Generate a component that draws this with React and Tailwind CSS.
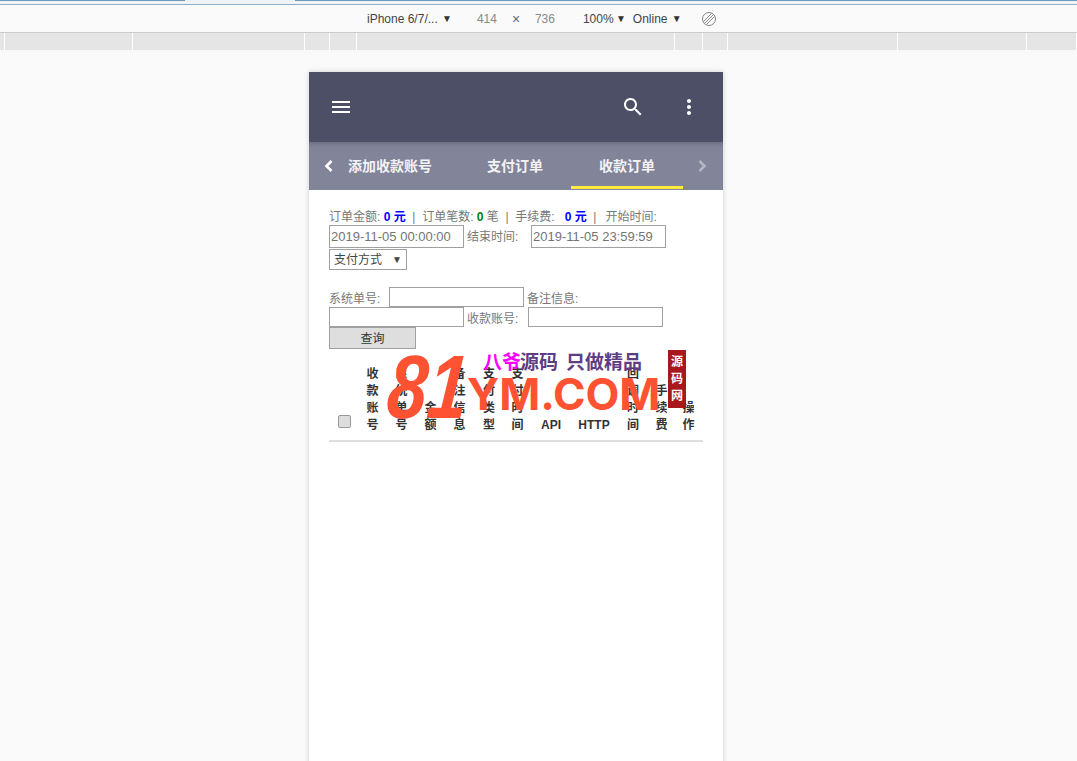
const rulerWidths = [5, 128, 172, 25, 27, 318, 28, 25, 170, 129, 50];
const font = "font-['Liberation_Sans','Noto_Sans_CJK_SC',sans-serif]";

const columns = [
  { label: '收款账号', w: 'w-[29px]' },
  { label: '系统单号', w: 'w-[29px]' },
  { label: '金额', w: 'w-[29px]' },
  { label: '备注信息', w: 'w-[29px]' },
  { label: '支付类型', w: 'w-[30px]' },
  { label: '支付时间', w: 'w-[27px]' },
  { label: 'API', w: 'w-[40px]', latin: true },
  { label: 'HTTP', w: 'w-[46px]', latin: true },
  { label: '回调时间', w: 'w-[32px]' },
  { label: '手续费', w: 'w-[25px]' },
  { label: '操作', w: 'w-[29px]' },
];

function DevToolbar() {
  return (
    <div className="h-[28px] border-b border-[#ccc] pt-[6px] text-[12px] leading-[14px] text-[#444]">
      <div className="flex items-center pl-[367px]">
        <span className="w-[75px]">iPhone 6/7/...</span>
        <span className="text-[10px] text-[#333]">▼</span>
        <span className="ml-[25px] w-[35px] text-[#888]">414</span>
        <span className="w-[23px] text-[14px] text-[#666]">×</span>
        <span className="w-[48px] text-[#888]">736</span>
        <span className="w-[33px]">100%</span>
        <span className="text-[10px] text-[#333]">▼</span>
        <span className="ml-[7px] w-[39px]">Online</span>
        <span className="text-[10px] text-[#333]">▼</span>
        <svg className="ml-[19px]" width="16" height="16" viewBox="0 0 16 16" fill="none" stroke="#888" strokeWidth="1">
          <circle cx="8" cy="8" r="6.5" />
          <path d="M2.5 10.5 10.5 2.5M5.5 13.5 13.5 5.5M3.5 12.5 12.5 3.5" />
        </svg>
      </div>
    </div>
  );
}

function Ruler() {
  return (
    <div className="flex h-[17px]">
      {rulerWidths.map((w, i) => (
        <div key={i} className="h-full border-r border-white bg-[#e5e5e5]" style={{ width: w }} />
      ))}
      <div className="h-full flex-1 bg-[#e5e5e5]" />
    </div>
  );
}

function Field({ value, className = 'h-[20px] w-[135px]' }) {
  return (
    <input
      readOnly
      value={value}
      className={`border border-[#a0a0a0] bg-white px-[1px] text-[13px] text-[#757575] ${className}`}
    />
  );
}

function MaterialIcon({ d, className = '' }) {
  return (
    <svg className={className} width="24" height="24" viewBox="0 0 24 24" fill="currentColor">
      <path d={d} />
    </svg>
  );
}

function Chevron({ d, className = '' }) {
  return (
    <svg className={className} width="16" height="16" viewBox="0 0 16 16" fill="none" stroke="currentColor" strokeWidth="2.6">
      <path d={d} />
    </svg>
  );
}

export default function App() {
  return (
    <div className={`h-[761px] w-full overflow-hidden bg-[#fafafa] ${font}`}>
      <div className="flex h-[5px] flex-col">
        <div className="flex h-[1px]">
          <div className="w-[185px] bg-[#6d9bbd]" />
          <div className="w-[110px] bg-[#f0f4f7]" />
          <div className="flex-1 bg-[#6d9bbd]" />
        </div>
        <div className="h-[3px] bg-[#f0f4f7]" />
        <div className="h-[1px] bg-[#8fb0c8]" />
      </div>
      <DevToolbar />
      <Ruler />

      <div className="ml-[309px] mt-[22px] h-[700px] w-[414px] bg-white shadow-[0_0_5px_rgba(0,0,0,0.18)]">
        <header className="flex h-[70px] items-center bg-[#4d4f66] pl-[20px] pr-[22px] text-white">
          <MaterialIcon d="M3 18h18v-2H3v2zm0-5h18v-2H3v2zm0-7v2h18V6H3z" />
          <div className="flex-1" />
          <MaterialIcon className="mr-[32px]" d="M15.5 14h-.79l-.28-.27C15.41 12.59 16 11.11 16 9.5 16 5.91 13.09 3 9.5 3S3 5.91 3 9.5 5.91 16 9.5 16c1.61 0 3.09-.59 4.23-1.57l.27.28v.79l5 4.99L20.49 19l-4.99-5zm-6 0C7.01 14 5 11.99 5 9.5S7.01 5 9.5 5 14 7.01 14 9.5 11.99 14 9.5 14z" />
          <MaterialIcon d="M12 8c1.1 0 2-.9 2-2s-.9-2-2-2-2 .9-2 2 .9 2 2 2zm0 2c-1.1 0-2 .9-2 2s.9 2 2 2 2-.9 2-2-.9-2-2-2zm0 6c-1.1 0-2 .9-2 2s.9 2 2 2 2-.9 2-2-.9-2-2-2z" />
        </header>

        <nav className="relative flex h-[48px] items-center bg-[#82849a] text-[14px] font-bold text-[#f3f3f6] shadow-[inset_0_4px_4px_-3px_rgba(0,0,0,0.25)]">
          <Chevron className="ml-[12px] text-white" d="M10.5 3 5.5 8l5 5" />
          <span className="ml-[11px] w-[139px]">添加收款账号</span>
          <span className="w-[112px]">支付订单</span>
          <span className="w-[95px]">收款订单</span>
          <Chevron className="text-[#b4b5c3]" d="M5.5 3l5 5-5 5" />
          <div className="absolute bottom-[1px] left-[262px] h-[3px] w-[112px] bg-[#ffeb3b]" />
        </nav>

        <div className="px-[20px] pt-[19px] text-[12px] text-[#777]">
          <div className="h-[16px] leading-[16px] whitespace-nowrap">
            订单金额: <b className="text-[#0000ff]">0 元</b> &nbsp;|&nbsp; 订单笔数: <b className="text-[#008000]">0</b> 笔 &nbsp;|&nbsp; 手续费: &nbsp;&nbsp;<b className="text-[#0000ff]">0 元</b> &nbsp;|&nbsp;&thinsp; 开始时间:
          </div>
          <div className="flex h-[23px] items-center">
            <Field value="2019-11-05 00:00:00" className="h-[23px] w-[135px]" />
            <span className="ml-[3px] w-[64px] pt-[1px]">结束时间:</span>
            <Field value="2019-11-05 23:59:59" className="h-[23px] w-[135px]" />
          </div>
          <div className="relative mt-[1px] flex h-[21px] w-[78px] items-center border border-[#a0a0a0] pl-[4px] text-[#444]">
            支付方式
            <span className="absolute right-[4px] text-[10px] text-[#444]">▼</span>
          </div>
          <div className="mt-[17px] flex h-[20px] items-center">
            <span className="w-[60px] pt-[3px]">系统单号:</span>
            <Field value="" />
            <span className="ml-[3px] pt-[3px]">备注信息:</span>
          </div>
          <div className="flex h-[20px] items-center">
            <Field value="" />
            <span className="ml-[3px] w-[61px] pt-[3px]">收款账号:</span>
            <Field value="" />
          </div>
          <button className="block h-[22px] w-[87px] border border-[#a0a0a0] bg-[#dedede] pt-[2px] text-[12px] text-[#333]">查询</button>

          <div className="relative">
            <table className="w-[374px] table-fixed border-b-2 border-[#ddd] text-[12px] text-[#333]">
              <thead>
                <tr className="h-[92px]">
                  <th className="w-[29px] pb-[12px] pl-[1px] align-bottom">
                    <input type="checkbox" className="h-[13px] w-[13px] appearance-none rounded-[2px] border border-[#999] bg-[#ddd] align-bottom" />
                  </th>
                  {columns.map((c) => (
                    <th key={c.label} className={`${c.w} pb-[6px] align-bottom text-center text-[12px] leading-[17px] font-bold`}>
                      {c.latin ? c.label : <span className="mx-auto block w-[12px] break-all">{c.label}</span>}
                    </th>
                  ))}
                </tr>
              </thead>
            </table>

            {/* watermark sits over the table header */}
            <div className="pointer-events-none absolute inset-0">
              <span className="absolute left-[59px] top-[2px] -skew-x-6 scale-y-[1.25] text-[72px] leading-[72px] font-bold italic text-[#ff5233]">81</span>
              <span className="absolute left-[138px] top-[19px] text-[44px] leading-[52px] font-bold text-[#ff5233] font-['Inter',sans-serif]">YM.COM</span>
              <span className="absolute left-[154px] top-[3px] text-[19px] leading-[22px] font-bold text-[#f0f]">八爷</span>
              <span className="absolute left-[191px] top-[3px] text-[19px] leading-[22px] font-bold text-[#5f3d83]">源码</span>
              <span className="absolute left-[237px] top-[3px] text-[19px] leading-[22px] font-bold text-[#5f3d83]">只做精品</span>
              <div className="absolute left-[339px] top-[1px] flex h-[58px] w-[18px] flex-col items-center justify-center bg-[#a8171b] text-[12px] leading-[17px] font-bold text-white">
                <span>源</span><span>码</span><span>网</span>
              </div>
            </div>
          </div>
        </div>
      </div>
    </div>
  );
}
